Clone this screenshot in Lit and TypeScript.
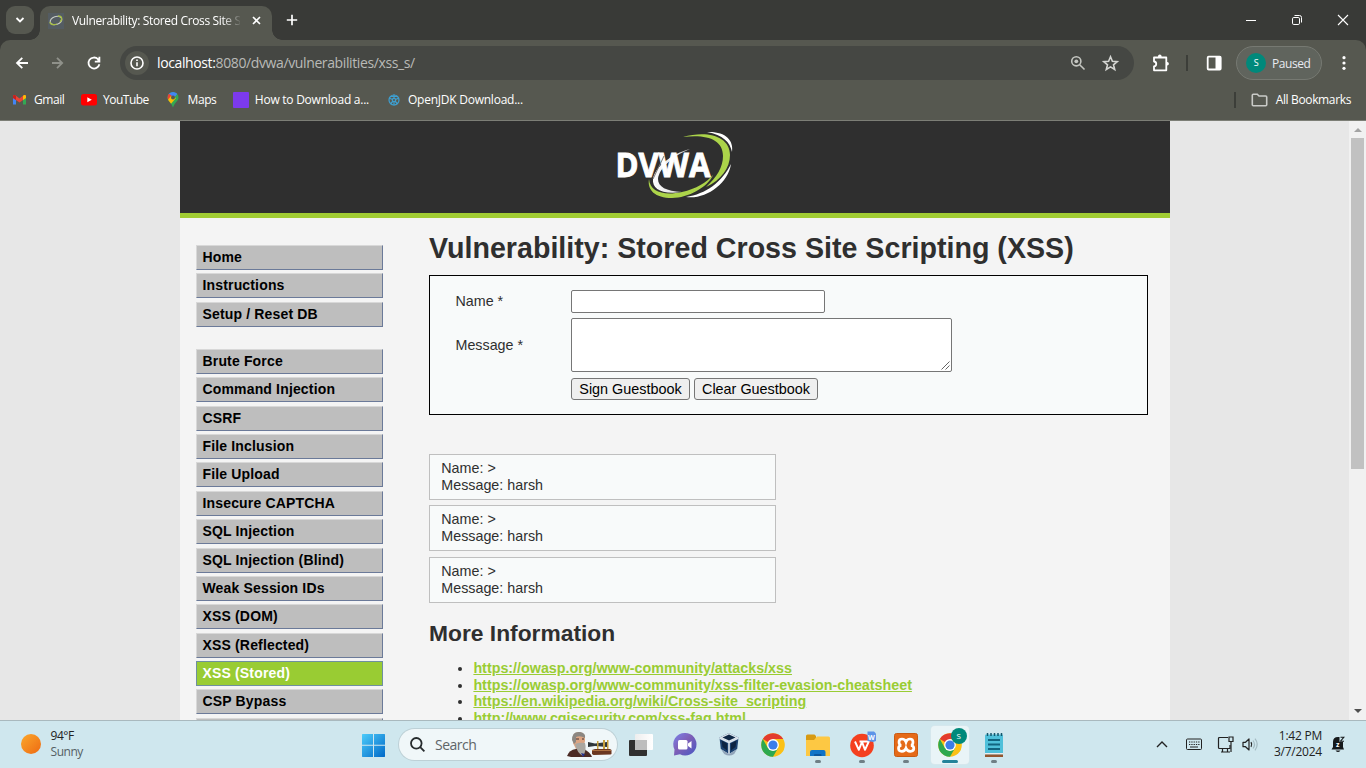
import { LitElement, html, css, svg } from "lit";
import { customElement } from "lit/decorators.js";
import { classMap } from "lit/directives/class-map.js";

const uiFont = css`
  :host { font-family: "Open Sans", "Noto Sans", sans-serif; box-sizing: border-box; flex: none; }
  * { box-sizing: border-box; }
  svg { display: block; flex: none; overflow: visible; }
`;

@customElement("browser-chrome")
class BrowserChrome extends LitElement {
  static styles = [uiFont, css`
    :host { display: block; width: 1366px; height: 121px; background: #565850; color: #fff; font-size: 12px; border-bottom: 1px solid #7c7e76; }
    .tabs { display: flex; height: 40px; background: #393a37; align-items: flex-end; }
    .search { width: 28px; height: 28px; margin: 0 12px 6px 6px; border-radius: 9px; background: #565850; display: grid; place-items: center; }
    .tab { position: relative; width: 232px; height: 34px; margin-left: -6px; background: #565850; border-radius: 10px 10px 0 0; display: flex; align-items: center; padding: 0 10px 0 8px; }
    .tab > * { margin-top: -5px; }
    .tab::before, .tab::after { content: ""; position: absolute; bottom: 0; width: 10px; height: 10px; }
    .tab::before { left: -10px; background: radial-gradient(circle at 0 0, transparent 9.5px, #565850 10px); }
    .tab::after { right: -10px; background: radial-gradient(circle at 100% 0, transparent 9.5px, #565850 10px); }
    .fav { width: 16px; height: 16px; background: #545c62; display: grid; place-items: center; }
    .title { width: 168px; margin-left: 8px; white-space: nowrap; overflow: hidden; line-height: 18px; letter-spacing: -.36px; mask-image: linear-gradient(90deg, #000 150px, transparent 170px); -webkit-mask-image: linear-gradient(90deg, #000 150px, transparent 170px); }
    .x { margin-left: 11.5px; }
    .plus { margin: 0 0 14px 14px; }
    .win { margin: 0 17px 14px auto; display: flex; gap: 34px; }
    .bar { display: flex; height: 46px; align-items: center; padding: 0 15px 0 15px; border-radius: 10px 10px 0 0; background: #565850; }
    .corner { background: linear-gradient(#393a37 0 20px, #565850 20px); }
    .nav { display: flex; gap: 21px; }
    .reload { margin-left: 1px; margin-right: -1px; }
    .omni { width: 1014px; height: 34px; margin-left: 19px; border-radius: 17px; background: #454743; display: flex; align-items: center; padding: 0 15px 0 5px; }
    .info { width: 24px; height: 24px; border-radius: 12px; background: #565850; display: grid; place-items: center; }
    .url { margin-left: 8px; font-size: 14px; line-height: 20px; letter-spacing: -.38px; color: #b9bab7; flex: 1; white-space: nowrap; }
    .url b { font-weight: 400; color: #fff; }
    .omni .star { margin-left: 16px; }
    .ext { margin-left: 18px; }
    .sep { width: 2px; height: 16px; background: #3c3e39; }
    .sep1 { margin: 0 18px 0 16px; }
    .paused { margin-left: 14px; width: 86px; height: 34px; border: 1px solid #767972; border-radius: 17px; background: #60645d; display: flex; align-items: center; padding-left: 9px; gap: 6px; color: #e8eaf0; letter-spacing: -.45px; }
    .avatar { width: 20px; height: 20px; border-radius: 10px; background: #00897b; color: #fff; font-size: 9px; display: grid; place-items: center; line-height: 20px; }
    .dots { margin-left: 20px; }
    .marks { display: flex; height: 28px; align-items: center; padding: 0 15px 0 12px; white-space: nowrap; line-height: 18px; letter-spacing: -.3px; }
    .mark { display: flex; align-items: center; }
    .all { margin-left: auto; display: flex; align-items: center; letter-spacing: -.36px; }
    .all svg { margin: 0 8px 0 15px; }
    .g { width: 53px; margin-right: 16px; gap: 7px; letter-spacing: -.45px; }
    .y { width: 68px; margin-right: 18px; gap: 6px; letter-spacing: -.5px; }
    .m { width: 49px; margin-right: 17px; gap: 8.5px; letter-spacing: -.4px; }
    .h { width: 136px; margin-right: 19px; gap: 6px; letter-spacing: -.25px; }
    .o { gap: 8px; letter-spacing: -.24px; }
    .sq { width: 16px; height: 16px; background: #7c3aed; border-radius: 1px; }
  `];
  render() {
    return html`
      <div class="tabs">
        <div class="search"><svg width="10" height="8" fill="none" stroke="#fff" stroke-width="1.8"><path d="M1.5 2 5 5.5 8.5 2"/></svg></div>
        <div class="tab">
          <div class="fav"><svg width="14" height="11" fill="none"><ellipse cx="7" cy="5.5" rx="6" ry="4" transform="rotate(-18 7 5.5)" stroke="#c9ccc8" stroke-width="1.1"/><path d="M9 1c4 0 5 3 2 6M1 7c0 3 4 3 7 2" stroke="#a6bd45" stroke-width="1.3"/></svg></div>
          <div class="title">Vulnerability: Stored Cross Site S</div>
          <svg class="x" width="9" height="9" stroke="#fff" stroke-width="1.6"><path d="m1 1 7 7M8 1 1 8"/></svg>
        </div>
        <svg class="plus" width="12" height="12" stroke="#fff" stroke-width="1.7"><path d="M6 .8v10.4M.8 6h10.4"/></svg>
        <div class="win">
          <svg width="12" height="12" stroke="#fff"><path d="M1 6.5h10"/></svg>
          <svg width="12" height="12" fill="none" stroke="#fff"><rect x="1.5" y="3.5" width="7" height="7" rx="1.3"/><path d="M3.5 1.5h5a2 2 0 0 1 2 2v5"/></svg>
          <svg width="12" height="12" stroke="#fff" stroke-width="1.1"><path d="m1 1 10 10M11 1 1 11"/></svg>
        </div>
      </div>
      <div class="corner"><div class="bar">
        <div class="nav">
          <svg width="14" height="14" fill="none" stroke="#fff" stroke-width="1.8"><path d="M13 7H2.4M7.3 1.8 2 7l5.3 5.2"/></svg>
          <svg width="14" height="14" fill="none" stroke="#8f918a" stroke-width="1.8"><path d="M2 7h10M7 1.8 12.200 7 7 12.2"/></svg>
          <svg class="reload" width="16" height="14" fill="none" stroke="#fff" stroke-width="1.8"><path d="M13.400 8.200A5.500 5.500 0 1 1 12 3.200M13.400.8v4.800H8.800M13 5.200 11.400 2.600"/></svg>
        </div>
        <div class="omni">
          <div class="info"><svg width="14" height="14" fill="none" stroke="#fff" stroke-width="1.6"><circle cx="7" cy="7" r="6"/><path d="M7 6.3v4M7 3.6v1.5"/></svg></div>
          <div class="url"><b>localhost:</b>8080/dvwa/vulnerabilities/xss_s/</div>
          <svg width="16" height="16" fill="none" stroke="#c4c6c1" stroke-width="1.6"><circle cx="6.3" cy="6.3" r="4.6"/><circle cx="6.300" cy="6.300" r="1.900" fill="#c4c6c1" stroke="none"/><path d="m9.7 9.7 4.8 4.8"/></svg>
          <svg class="star" width="17" height="16" fill="none" stroke="#d4d5d2" stroke-width="1.6"><path d="m8.5 1.8 1.9 4.5 4.8.4-3.7 3.1 1.2 4.7-4.2-2.6-4.2 2.6 1.2-4.7-3.7-3.1 4.8-.4z"/></svg>
        </div>
        <svg class="ext" width="18" height="18" fill="none" stroke="#fff" stroke-width="1.8"><path d="M2 3.500h12.300v12.800H2v-4c3-.4 3-4.400 0-4.800z" stroke-linejoin="round"/><path d="M6 3V2.300a1.800 1.800 0 0 1 3.600 0V3zM14.600 8h.6a1.600 1.600 0 0 1 0 3.400h-.6z" fill="#fff" stroke="none"/></svg>
        <div class="sep sep1"></div>
        <svg class="panel" width="16" height="16"><rect x="1.700" y="1.700" width="13" height="12.800" rx="1" fill="none" stroke="#fff" stroke-width="1.800"/><path d="M9.500 1h5.500v14H9.500z" fill="#fff"/></svg>
        <div class="paused"><span class="avatar">S</span>Paused</div>
        <svg class="dots" width="4" height="14" fill="#fff"><circle cx="2" cy="1.700" r="1.600"/><circle cx="2" cy="7" r="1.600"/><circle cx="2" cy="12.300" r="1.600"/></svg>
      </div></div>
      <div class="marks">
        <div class="mark g"><svg width="15" height="12"><path d="M1 2v8.500h3V5z" fill="#4285f4"/><path d="M11 5v5.500h3V2z" fill="#34a853"/><path d="M1 2.200Q1 .5 3 1l4.500 3.500L12 1q2-.5 2 1.200V4L7.500 8.500 1 4z" fill="#ea4335"/><path d="M11 2l1-1q2-.5 2 1.200V4l-3 2z" fill="#fbbc04"/><path d="M1 2.200Q1 .5 3 1l1 .8V6L1 4z" fill="#c5221f"/></svg>Gmail</div>
        <div class="mark y"><svg width="16" height="12"><rect width="16" height="11.500" rx="2.500" fill="#f00"/><path d="m6.300 3.300 4.500 2.500-4.500 2.500z" fill="#fff"/></svg>YouTube</div>
        <div class="mark m"><svg width="12" height="16"><clipPath id="pin"><path d="M6 0a5.500 5.500 0 0 1 5.500 5.500C11.500 9 8 10 6 15.500 4 10 .5 9 .5 5.500A5.500 5.500 0 0 1 6 0z"/></clipPath><g clip-path="url(#pin)"><path d="M0 0h12v16H0z" fill="#34a853"/><path d="M0 0h12L5 8z" fill="#4285f4"/><path d="M0 0 5 4 0 9z" fill="#ea4335"/><path d="m0 9 4-5 5 2-6 7z" fill="#fbbc04"/></g><circle cx="6" cy="5.500" r="2" fill="#565850"/></svg>Maps</div>
        <div class="mark h"><span class="sq"></span>How to Download a...</div>
        <div class="mark o"><svg width="12" height="12" fill="none" stroke="#3e9fd0" stroke-width="1.200"><circle cx="6" cy="6" r="5"/><circle cx="6" cy="6" r="1.700"/><path d="M6 .5v4M6 8v3.500M1 4l3.500 1.500M11 4 7.500 5.500M2.500 10l2.500-3M9.500 10 7 7M2.500 2.500h7"/></svg>OpenJDK Download...</div>
        <div class="all"><div class="sep"></div><svg width="17" height="14" fill="none" stroke="#c9cac7" stroke-width="1.600"><path d="M1.300 2.300q0-1 1-1h4L8 3h6.700q1 0 1 1v7.700q0 1-1 1H2.300q-1 0-1-1z"/></svg>All Bookmarks</div>
      </div>`;
  }
}

const menuGroups = [
  ["Home", "Instructions", "Setup / Reset DB"],
  ["Brute Force", "Command Injection", "CSRF", "File Inclusion", "File Upload", "Insecure CAPTCHA", "SQL Injection", "SQL Injection (Blind)", "Weak Session IDs", "XSS (DOM)", "XSS (Reflected)", "XSS (Stored)", "CSP Bypass", "JavaScript"],
];
const links = [
  "https://owasp.org/www-community/attacks/xss",
  "https://owasp.org/www-community/xss-filter-evasion-cheatsheet",
  "https://en.wikipedia.org/wiki/Cross-site_scripting",
  "http://www.cgisecurity.com/xss-faq.html",
];

@customElement("dvwa-page")
class DvwaPage extends LitElement {
  static styles = css`
    :host { display: flex; flex: none; width: 1366px; height: 599px; overflow: hidden; background: #e7e7e7; font-family: "Liberation Sans", Arial, sans-serif; font-size: 14.300px; color: #2f2f2f; }
    * { box-sizing: border-box; }
    .site { width: 990px; height: 599px; margin-left: 180px; background: #f4f4f4; overflow: hidden; }
    .head { height: 97px; background: #2f2f2f; border-bottom: 5px solid #a1cc33; display: flex; justify-content: center; padding-top: 10px; }
    .head svg { display: block; overflow: visible; }
    .wm { font: 700 34.500px "Open Sans", sans-serif; }
    .cols { display: flex; }
    .menu { width: 187px; margin: 26.900px 46px 0 16px; }
    .group { display: flex; flex-direction: column; gap: 3.400px; margin-bottom: 22.100px; }
    .item { height: 25px; flex: none; background: #bebebe; border: 1px solid; border-color: #d8d8d8 #6b7a99 #6b7a99 #d8d8d8; font-size: 14px; font-weight: 700; color: #000; letter-spacing: .16px; line-height: 23.100px; padding-left: 5.500px; }
    .item.on { background: #9c3; color: #fff; border-color: #6f8fa0; }
    .main { width: 720px; }
    h1 { margin: 12px 0 0; font-size: 28.630px; line-height: 36px; white-space: nowrap; }
    .form { width: 719px; height: 140px; margin-top: 9px; border: 1px solid #000; background: #f8fafa; padding: 14px 0 0 25.500px; display: grid; grid-template-columns: 115.500px 1fr; grid-template-rows: 23px 54px 22px; row-gap: 5px; align-items: center; }
    .nm { padding-bottom: 1.500px; }
    .in { width: 254px; height: 23px; background: #fff; border: 1px solid #767676; border-radius: 2px; }
    .ta { width: 381px; height: 54px; background: #fff; border: 1px solid #767676; border-radius: 2px; display: flex; align-items: flex-end; justify-content: flex-end; padding: 1px; }
    .btns { display: flex; gap: 4px; grid-column: 2; padding-top: 2px; }
    .btn { height: 22px; border: 1px solid #767676; border-radius: 3px; background: #efefef; font: 14.400px "Liberation Sans", Arial, sans-serif; color: #000; padding: 0; width: 119px; white-space: nowrap; }
    .btn.c { width: 124px; }
    .list { display: flex; flex-direction: column; gap: 5.400px; margin-top: 39px; }
    .entry { width: 347px; height: 46px; flex: none; border: 1px solid #bfbfbf; background: #f8fafa; padding: 5px 11.300px; line-height: 16.800px; }
    h2 { margin: 17px 0 0; font-size: 22.800px; line-height: 26px; }
    ul { margin: 14.500px 0 0; padding-left: 44.400px; }
    li { line-height: 16.500px; white-space: nowrap; }
    .lk { color: #9c3; font-weight: 700; text-decoration: underline; }
    .scroll { width: 17px; height: 599px; margin-left: auto; background: #f1f1f1; display: flex; flex-direction: column; align-items: center; }
    .thumb { width: 13px; height: 331px; background: #c1c1c1; }
    .up, .dn { width: 0; height: 0; border: 4px solid transparent; }
    .up { border-bottom-color: #a3a3a3; border-top: 0; margin: 7px 0 6px; }
    .dn { border-top-color: #505050; border-bottom: 0; margin: auto 0 7px; }
  `;
  render() {
    return html`
      <div class="site">
        <div class="head">
          <svg width="118" height="68">
            <defs><linearGradient id="fw" x1="0" x2="1"><stop offset="0" stop-color="#fff"/><stop offset="1" stop-color="#ccc"/></linearGradient></defs>
            <path d="M74 18C55 23 39 36 37 48c-1 10 9 16 29 13C50 60 42 56 42 48 43 38 56 25 74 18z" fill="url(#fw)"/>
            <text class="wm" x="-.5" y="45.500" textLength="95" lengthAdjust="spacingAndGlyphs" fill="#fff" stroke="#fff" stroke-width=".9">DVWA</text>
            <path d="M37 48 48 25" fill="none" stroke="#777" stroke-width="1"/>
            <path d="M67 6C91-1 114 5 114 24c0 13-9 25-24 32 11-10 17-20 17-31C107 8 90 3 67 6z" fill="#acd44a"/>
            <path d="M91 1c18-1 27 8 25 20-2-10-9-17-25-20z" fill="#fff"/>
            <path d="M115 33c-3 20-26 36-45 33 20-3 36-15 45-33z" fill="#fff"/>
            <path d="M33 48c1 13 15 17 33 13 14-3 25-10 31-17-5 12-25 23-41 23-17 0-25-8-23-19z" fill="#acd44a"/>
          </svg>
        </div>
        <div class="cols">
          <div class="menu">${menuGroups.map(g => html`<div class="group">${g.map(t => html`<div class=${classMap({ item: true, on: t === "XSS (Stored)" })}>${t}</div>`)}</div>`)}</div>
          <div class="main">
            <h1>Vulnerability: Stored Cross Site Scripting (XSS)</h1>
            <div class="form">
              <span class="nm">Name *</span><div class="in"></div>
              <span>Message *</span><div class="ta"><svg width="9" height="9" stroke="#555" stroke-width=".9"><path d="M.5 8.500l8-8M4.500 8.500l4-4"/></svg></div>
              <div class="btns"><button class="btn">Sign Guestbook</button><button class="btn c">Clear Guestbook</button></div>
            </div>
            <div class="list">${[0, 1, 2].map(() => html`<div class="entry">Name: &gt;<br>Message: harsh</div>`)}</div>
            <h2>More Information</h2>
            <ul>${links.map(l => html`<li><span class="lk">${l}</span></li>`)}</ul>
          </div>
        </div>
      </div>
      <div class="scroll"><div class="up"></div><div class="thumb"></div><div class="dn"></div></div>`;
  }
}

const chromeLogo = svg`
  <circle cx="12" cy="12" r="11.800" fill="#fbc116"/>
  <path d="M12 12 1.800 6.100A11.800 11.800 0 0 1 22.200 6.100H12z" fill="#e33b2e"/>
  <path d="M1.800 6.100A11.800 11.800 0 0 0 12 23.800L17.100 15 12 12 6.900 15z" fill="#2da94f"/>
  <circle cx="12" cy="12" r="5.900" fill="#fff"/><circle cx="12" cy="12" r="4.600" fill="#3b7de9"/>`;

@customElement("task-bar")
class TaskBar extends LitElement {
  static styles = [uiFont, css`
    :host { display: flex; width: 1366px; height: 48px; border-top: 1px solid #a9b9be; background: #cfe7ee; color: #222; font-size: 12px; align-items: center; }
    .weather { display: flex; align-items: center; width: 341px; padding-left: 21px; gap: 10px; line-height: 16px; letter-spacing: -.45px; }
    .text { padding-bottom: 1px; white-space: nowrap; margin-left: -.5px; }
    .weather svg { margin-top: -2px; }
    .sub { color: #555f63; }
    .start { margin-left: 20px; }
    .search { width: 218px; height: 31px; margin-left: 14px; border-radius: 16px; background: #f0f7f9; box-shadow: 0 0 0 1px #bdd0d6; display: flex; align-items: center; padding: 0 4px 0 11px; font-size: 14px; color: #5f6568; letter-spacing: -.5px; }
    .search .art { margin-left: auto; }
    .label { margin-left: 10px; }
    .apps { display: flex; margin-left: 5px; gap: 6.130px; }
    .app { width: 38px; height: 38px; border-radius: 4px; display: flex; flex-direction: column; align-items: center; padding-top: 7px; }
    .app.on { background: #e9f4f7; box-shadow: 0 0 0 .5px #dce8ec; }
    .dot { width: 6px; height: 3px; border-radius: 2px; background: #6f7f85; margin-top: 3px; }
    .on .dot { width: 16px; background: #23839a; }
    .av { font: 8px "Open Sans", sans-serif; }
    .ww { font: 700 7px "Open Sans", sans-serif; }
    .tray { margin-left: auto; display: flex; align-items: center; padding-right: 21px; }
    .clock { line-height: 16px; width: 50px; margin: 0 9px 0 14px; letter-spacing: -.24px; white-space: nowrap; display: flex; flex-direction: column; align-items: flex-end; padding-bottom: 1px; }
    .kb { margin: 0 15px 0 18px; }
    .snd { margin-left: 8px; }
    .zz { font: 700 7px "Open Sans", sans-serif; }
  `];
  app(icon: unknown, dot = false, on = false) {
    return html`<div class=${classMap({ app: true, on })}><svg width="24" height="24">${icon}</svg>${dot ? html`<span class="dot"></span>` : ""}</div>`;
  }
  render() {
    return html`
      <div class="weather"><svg width="20" height="20"><defs><linearGradient id="sun" x1="0" y1="0" x2="1" y2="1"><stop stop-color="#fba82c"/><stop offset="1" stop-color="#ee6a12"/></linearGradient></defs><circle cx="10" cy="10" r="10" fill="url(#sun)"/></svg><div class="text"><div>94°F</div><div class="sub">Sunny</div></div></div>
      <svg class="start" width="24" height="24"><defs><linearGradient id="win" gradientUnits="userSpaceOnUse" x1="0" y1="0" x2="24" y2="24"><stop stop-color="#50d0fc"/><stop offset="1" stop-color="#0069c8"/></linearGradient></defs><path d="M1.500 1H12v10.700H1V1.500zM13 1h10.500l.5.500v10.200H13zM1 12.700h11V24H1.500L1 23.500zM13 12.700h11v10.800l-.5.500H13z" fill="url(#win)"/></svg>
      <div class="search">
        <svg width="15" height="15" fill="none" stroke="#262b2d" stroke-width="1.800"><circle cx="6.300" cy="6.300" r="5.300"/><path d="m10.200 10.200 4.200 4.200"/></svg>
        <span class="label">Search</span>
        <svg class="art" width="47" height="27">
          <path d="M1 25q2-6 9-7h8q6 3 8 8H5z" fill="#4b2a24"/><path d="M7 5q1-4 7-4 6 1 5 9l-2 8h-7L7 12z" fill="#dca583"/><path d="M6 9Q6 0 14 1q6 1 5 6-5-3-9-1v5l-2 2z" fill="#8b8782"/><path d="M9 13q5-2 10-1 2 7-2 13-6-3-8-12z" fill="#aaa7a1"/><path d="M10 8h3M16 8h2" stroke="#433"/><path d="m15 22 2 4 2-3z" fill="#24308a"/>
          <path d="M22 11l7 1.500 12-1.500v5l-12-1-7 1z" fill="#30373b"/><path d="M31 10h1.500v10H31zM37 9h2v12h-2zM41 9h1.500v10H41z" fill="#c7a03e"/><path d="M26 19l3-1h15l1.500 1v4l-1 .5-17 .5-1.500-1z" fill="#6b3720"/><path d="M26 19.500h19" stroke="#ad7041"/>
        </svg>
      </div>
      <div class="apps">
        ${this.app(svg`<defs><linearGradient id="tv" x1="0" x2="1"><stop stop-color="#eee"/><stop offset="1" stop-color="#fff"/></linearGradient></defs><rect x="0" y="7" width="18" height="16" rx="1" fill="#303030"/><rect x="6" y="1" width="18" height="16" rx="1" fill="url(#tv)"/><path d="M6 7h12v10H6z" fill="#bdbdbd"/>`)}
        ${this.app(svg`<defs><linearGradient id="ch" x1="0" y1="0" x2="1" y2="1"><stop stop-color="#7b83eb"/><stop offset=".45" stop-color="#7f5fb6"/><stop offset="1" stop-color="#4857c4"/></linearGradient></defs><path d="M12 0a11.300 11.300 0 1 1-5 21.300L1 22.500l.5-6A11.300 11.300 0 0 1 12 0z" fill="url(#ch)"/><rect x="5" y="7" width="9.500" height="9.500" rx="1.500" fill="#fff"/><path d="m15 10.500 3.500-2.500v7.500L15 13z" fill="#fff"/>`)}
        ${this.app(svg`<path d="m12 0 9.500 4.500-1.300 11.500L12 21l-8.200-5L2.500 4.500z" fill="#1d4270"/><path d="m12 0 9.500 4.500L12 9 2.500 4.500z" fill="#dce5ed"/><path d="m12 1.500 6.500 3L12 7.500l-6.500-3z" fill="#0e2745"/><path d="M12 9v12M2.500 5 12 9.500 21.500 5" fill="none" stroke="#dce5ed" stroke-width="1.600"/><path d="m4.500 7.500 5.500 3v7l-4.500-3.500zM19.500 7.500l-5.500 3v7l4.500-3.500z" fill="#0d2442"/><path d="m3.800 16 8.200 5 8.200-5-3 5q-5 3-10 0z" fill="#92a5ba"/>`)}
        ${this.app(chromeLogo)}
        ${this.app(svg`<path d="M0 3q0-1.500 1.500-1.500h7L10 3v4H0z" fill="#d79a12"/><path d="M0 7h8l3-3.500h11.500Q24 3.500 24 5v18H0z" fill="#fdc843"/><path d="M4 23v-4q0-2 2-2h11.500q2 0 2 2v4z" fill="#0f73c7"/><path d="M8 23v-1q0-1 1-1h5.500q1 0 1 1v1z" fill="#0a559d"/>`, true)}
        ${this.app(svg`<circle cx="12" cy="12.500" r="11.800" fill="#f4401f"/><path d="m5 8.500 3.800 8.300 3.200-8 3 8L18.800 8.500H9.500" fill="none" stroke="#fff" stroke-width="1.900" stroke-linejoin="round"/><path d="M17.500-1.500H24l2 2v7.500l-3 1-5.500-1z" fill="#5d94e8"/><text class="ww" x="18" y="6.500" fill="#fff">W</text>`, true)}
        ${this.app(svg`<rect x=".5" y=".5" width="23" height="23" rx="2" fill="#e56a18" stroke="#c95a12"/><path d="M12 9Q13 6 16 6t3 3-2 3.300q2.800.5 2.800 3.200t-3.300 2.800-4.500-3Q11 18.300 7.800 18.300T4.500 15.500t2.800-3.200Q5 12 5 9t3-3 4 3z" fill="none" stroke="#fff" stroke-width="2.700"/>`, true)}
        ${this.app(svg`${chromeLogo}<circle cx="21" cy="3" r="8" fill="#00897b"/><text class="av" x="18.600" y="5.900" fill="#fff">S</text>`, true, true)}
        ${this.app(svg`<rect x="3" y="1.500" width="18" height="20" rx="1" fill="#4fc0da"/><path d="M3 20h18v1.500H3z" fill="#eee"/><path d="M3 21.500h18V24H3z" fill="#93562f"/><path d="M5.500 0v3M9 0v3M12.500 0v3M16 0v3M19.500 0v3" stroke="#14576d" stroke-width="1.500"/><path d="M6 7h12M6 11.500h12M6 16h12" stroke="#126480" stroke-width="1.900"/>`, true)}
      </div>
      <div class="tray">
        <svg width="12" height="8" fill="none" stroke="#222" stroke-width="1.400"><path d="m1 6 5-5 5 5"/></svg>
        <svg class="kb" width="16" height="12" fill="none" stroke="#222"><rect x=".5" y="0" width="15" height="10.500" rx="1"/><path d="M3 3h10.500M3 5.500h10.500" stroke-dasharray="1.300 1"/><path d="M4 8h8"/></svg>
        <svg width="17" height="17" fill="none" stroke="#222" stroke-width="1.200"><path d="M11 1.500H2.500q-1 0-1 1v9q0 1 1 1H13V9M4 16h9M5.500 13v3M10.500 13v3"/><path d="M12 1h4v4.500h-4zM14 5.500V16"/></svg>
        <svg class="snd" width="16" height="14" fill="none" stroke="#222" stroke-width="1.200"><path d="M1 4.300h2.500L7 1v11L3.500 8.700H1z" stroke-linejoin="round"/><path d="M9 4.200q1.500 2.300 0 4.600"/><path d="M11 2.500q3 4 0 8M13 .7q4.500 5.800 0 11.600" stroke="#a5bcc3"/></svg>
        <div class="clock"><span>1:42 PM</span><span>3/7/2024</span></div>
        <svg width="14" height="17"><path d="M2 6q0-5 5-5h1.500v5H12v5l1 2.500H.5L2 11z" fill="#15191b"/><path d="M4.500 14.500h5q-2.500 3-5 0z" fill="#15191b"/><path d="M9.500 1.300h3.300L9.500 5.200h3.500" fill="none" stroke="#15191b" stroke-width="1.100"/><text class="zz" x="5" y="11" fill="#fff">z</text></svg>
      </div>`;
  }
}

@customElement("app-root")
class AppRoot extends LitElement {
  static styles = css`:host { display: flex; flex-direction: column; width: 1366px; height: 768px; overflow: hidden; }`;
  render() {
    return html`<browser-chrome></browser-chrome><dvwa-page></dvwa-page><task-bar></task-bar>`;
  }
}
